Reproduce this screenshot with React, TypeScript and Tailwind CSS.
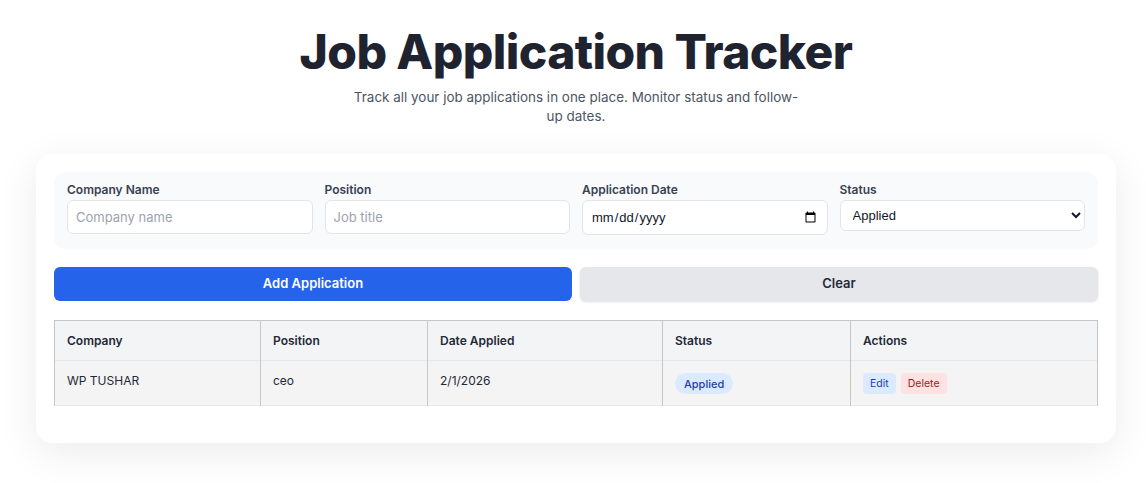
import React from "react";

const th =
  "border-x border-[#c6c6c6] px-3 py-[11.5px] text-left text-xs leading-4 font-semibold text-[#1f2937]";
const td = "border-x border-[#c6c6c6] px-3 pt-3 pb-[11px] align-top text-xs leading-4 text-[#1f2937]";
const inputCls =
  "h-[34px] w-full rounded-md border border-[#e2e4e8] bg-white px-2 text-[13px] text-[#1f2937] placeholder:text-[#9ca3af] focus:outline-none";

export default function App() {
  return (
    <div className="min-h-screen bg-white pt-7 font-['Inter',sans-serif] text-[#1f2937]">
      <div className="ml-9 w-[1080px]">
        <h1 className="text-center text-5xl font-extrabold leading-none tracking-[-0.6px] text-[#1f2330]">
          Job Application Tracker
        </h1>
        <p className="mt-3 text-center text-[13.45px] leading-[19px] text-[#4b5563]">
          <span className="block whitespace-nowrap">
            Track all your job applications in one place. Monitor status and follow-
          </span>
          <span className="block whitespace-nowrap">up dates.</span>
        </p>

        <div className="mt-7 rounded-2xl bg-white p-4.5 shadow-[0_10px_40px_rgba(0,0,0,0.08)]">
          <div className="grid grid-cols-4 gap-3 rounded-xl bg-[#f9fafb] px-[13px] pt-3 pb-[14px]">
            <div>
              <label className="mb-1 block text-xs leading-none font-semibold text-[#374151]">Company Name</label>
              <input type="text" placeholder="Company name" className={inputCls} />
            </div>
            <div>
              <label className="mb-1 block text-xs leading-none font-semibold text-[#374151]">Position</label>
              <input type="text" placeholder="Job title" className={inputCls} />
            </div>
            <div>
              <label className="mb-1 block text-xs leading-none font-semibold text-[#374151]">Application Date</label>
              <input
                type="date"
                className="h-[35px] w-full rounded-md border border-[#e2e4e8] bg-white px-2 font-['Liberation_Sans',sans-serif] text-[13px] text-[#111827] focus:outline-none"
              />
            </div>
            <div>
              <label className="mb-1 block text-xs leading-none font-semibold text-[#374151]">Status</label>
              <select
                defaultValue="Applied"
                className="h-[31px] w-full rounded-md border border-[#e2e4e8] bg-white px-2 font-['Liberation_Sans',sans-serif] text-[13px] text-[#111827] focus:outline-none"
              >
                <option>Applied</option>
                <option>Interview</option>
                <option>Offer</option>
                <option>Rejected</option>
              </select>
            </div>
          </div>

          <div className="mt-4.5 grid grid-cols-2 gap-2">
            <button className="h-[34px] rounded-md bg-[#2563eb] text-[13px] font-semibold text-white">
              Add Application
            </button>
            <button className="h-[34px] rounded-md bg-[#e5e7eb] text-[13px] font-semibold text-[#1f2937] shadow-sm">
              Clear
            </button>
          </div>

          <div className="mt-[19px] mb-[19px]">
            <table className="w-full border-collapse">
              <thead>
                <tr className="border-t border-b border-t-[#c6c6c6] border-b-[#e5e7eb] bg-[#f3f4f6]">
                  <th className={`w-[206px] ${th}`}>Company</th>
                  <th className={`w-[167px] ${th}`}>Position</th>
                  <th className={`w-[235px] ${th}`}>Date Applied</th>
                  <th className={`w-[188px] ${th}`}>Status</th>
                  <th className={th}>Actions</th>
                </tr>
              </thead>
              <tbody>
                <tr className="border-b border-[#e5e7eb] bg-[#f4f4f5]">
                  <td className={td}>WP TUSHAR</td>
                  <td className={td}>ceo</td>
                  <td className={td}>2/1/2026</td>
                  <td className={td}>
                    <span className="inline-flex h-[21px] items-center rounded-full bg-[#dbeafe] px-[9px] text-[11px] font-medium text-[#1e40af]">
                      Applied
                    </span>
                  </td>
                  <td className={td}>
                    <div className="flex gap-[5px]">
                      <button className="flex h-[21px] items-center rounded bg-[#dbeafe] px-[7px] text-[10.5px] text-[#1e40af]">
                        Edit
                      </button>
                      <button className="flex h-[21px] items-center rounded bg-[#fee2e2] px-[7px] text-[10.5px] text-[#991b1b]">
                        Delete
                      </button>
                    </div>
                  </td>
                </tr>
              </tbody>
            </table>
          </div>
        </div>
      </div>
    </div>
  );
}
